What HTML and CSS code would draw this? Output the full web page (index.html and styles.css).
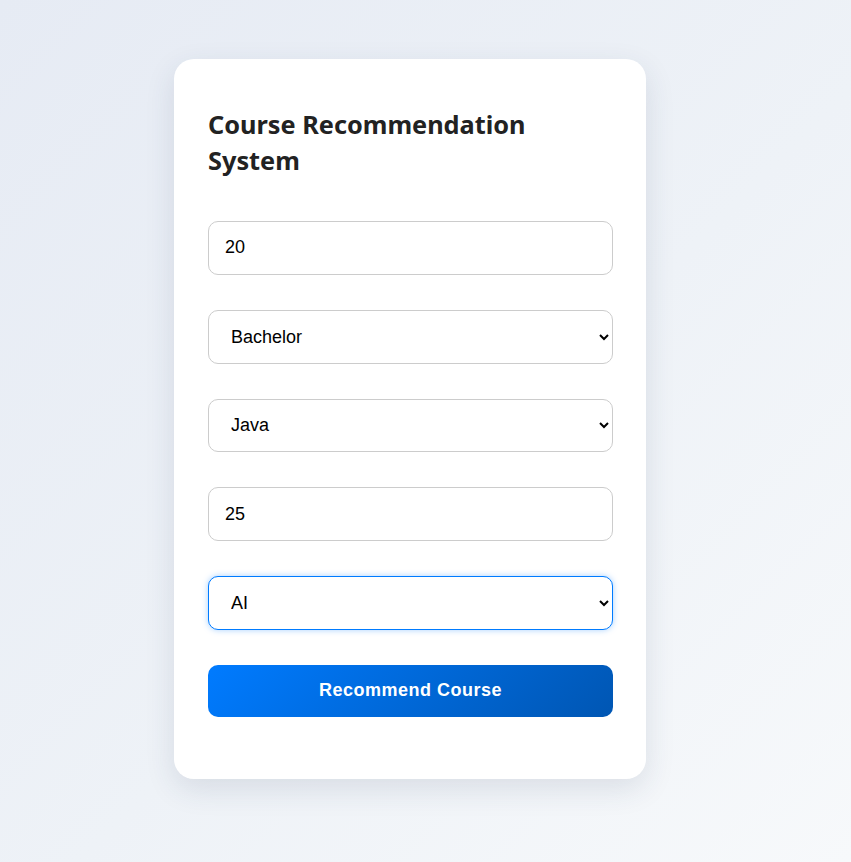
FILE: index.html
```html
<!DOCTYPE html>
<html lang="en">
<head>
<meta charset="utf-8">
<title>Course Recommendation System</title>
<link rel="stylesheet" href="styles.css">
</head>
<body>
<div class="page">
  <div class="card">
    <h2 class="title">Course Recommendation System</h2>
    <form class="form">
      <input class="field" type="number" value="20">
      <select class="field">
        <option>Bachelor</option>
      </select>
      <select class="field">
        <option>Java</option>
      </select>
      <input class="field" type="number" value="25">
      <select class="field focused">
        <option>AI</option>
      </select>
      <button class="btn" type="button">Recommend Course</button>
    </form>
  </div>
</div>
</body>
</html>
```

FILE: styles.css
```css
html, body {
  margin: 0;
  padding: 0;
  height: 100%;
}
body {
  background: linear-gradient(135deg, #e6ebf4 0%, #eef2f7 55%, #f7f9fb 100%);
  font-family: "Liberation Sans", Arial, sans-serif;
}
.page {
  padding: 59px 0 0 174px;
}
.card {
  width: 405px;
  padding: 47px 33px 62px 34px;
  background: #fff;
  border-radius: 20px;
  box-shadow: 0 10px 30px rgba(40, 60, 90, 0.12);
}
.title {
  margin: 0 0 43px;
  font-family: "Noto Sans", "Open Sans", sans-serif;
  font-size: 25.3px;
  line-height: 36px;
  font-weight: 700;
  color: #222;
}
.form {
  display: flex;
  flex-direction: column;
  gap: 35px;
}
.field {
  box-sizing: border-box;
  width: 100%;
  height: 53.75px;
  padding: 0 16px;
  font-family: "Liberation Sans", Arial, sans-serif;
  font-size: 18px;
  color: #000;
  background: #fff;
  border: 1px solid #ccc;
  border-radius: 10px;
  outline: none;
}
select.field {
  padding-left: 18px;
  padding-right: 10px;
}
.focused {
  border-color: #007bff;
  box-shadow: 0 0 6px rgba(0, 123, 255, 0.35);
}
.btn {
  height: 52px;
  border: none;
  border-radius: 10px;
  background: linear-gradient(135deg, #007bff, #0056b3);
  color: #fff;
  font-family: "Liberation Sans", Arial, sans-serif;
  font-size: 18px;
  letter-spacing: 0.5px;
  font-weight: 700;
  cursor: pointer;
}
```
